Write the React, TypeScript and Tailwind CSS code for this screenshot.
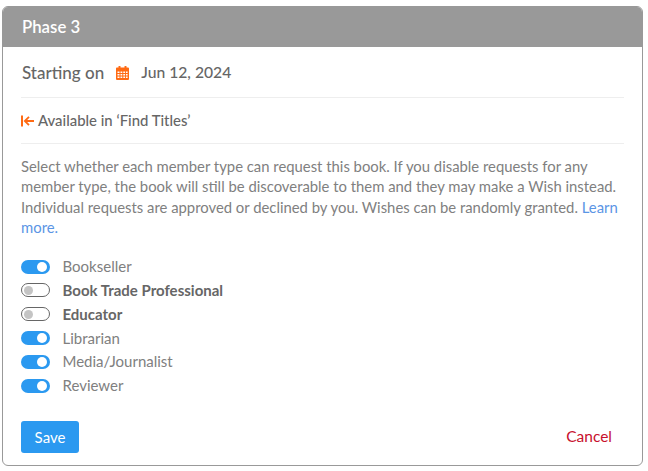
const members = [
    { label: "Bookseller", on: true },
    { label: "Book Trade Professional", on: false },
    { label: "Educator", on: false },
    { label: "Librarian", on: true },
    { label: "Media/Journalist", on: true },
    { label: "Reviewer", on: true },
];

const Toggle = ({ on }: { on: boolean }) =>
    on ? (
        <span className="flex items-center justify-end w-[29px] h-[14px] pr-[3px] rounded-full bg-[#2b99f0]">
            <span className="w-[10px] h-[10px] rounded-full bg-white" />
        </span>
    ) : (
        <span className="flex items-center w-[29px] h-[14px] pl-[2px] rounded-full bg-white border border-[#666]">
            <span className="w-[9px] h-[9px] rounded-full bg-[#c4c4c4]" />
        </span>
    );

const CalendarIcon = () => (
    <svg width="13" height="14" viewBox="0 0 13 14" className="block text-[#ff6a13]">
        <rect x="2.5" y="0" width="2" height="3" rx="0.5" fill="currentColor" />
        <rect x="8.5" y="0" width="2" height="3" rx="0.5" fill="currentColor" />
        <path
            fillRule="evenodd"
            fill="currentColor"
            d="M1.2 1.5H12a1 1 0 0 1 1 1V13a1 1 0 0 1-1 1H1a1 1 0 0 1-1-1V2.500a1 1 0 0 1 1.200-1ZM1.500 5.500V7h2V5.500ZM4.500 5.500V7h1.800V5.500ZM7.300 5.500V7h1.800V5.500ZM10 5.500V7h1.600V5.500ZM1.500 8V9.500h2V8ZM4.500 8V9.500h1.800V8ZM7.300 8V9.500h1.800V8ZM10 8V9.500h1.600V8ZM1.500 10.500V12h2V10.500ZM4.500 10.500V12h1.800V10.500ZM7.300 10.500V12h1.800V10.500ZM10 10.500V12h1.600V10.500Z"
        />
    </svg>
);

const ArrowIcon = () => (
    <svg width="13" height="12" viewBox="0 0 13 12" className="block text-[#ff6a13]">
        <rect x="0" y="0.500" width="2" height="11" fill="currentColor" />
        <path d="M8 1.800 3.800 6 8 10.200M4 6H13" fill="none" stroke="currentColor" strokeWidth="1.800" />
    </svg>
);

export default function App() {
    return (
        <div className="w-[648px] h-[471px] bg-white pt-[6px] pl-[2px] font-['Lato','Noto_Sans',sans-serif] text-[#666]">
            <div className="flex flex-col w-[641px] h-[460px] border border-[#999] rounded-[6px] overflow-hidden">
                <div className="flex items-center h-[41px] px-[19px] -mt-px bg-[#999] text-white text-[16.800px] font-semibold">
                    Phase 3
                </div>
                <div className="flex flex-col flex-1 px-[18px]">
                    <div className="flex items-center h-[51px] pt-[2px] pl-px border-b border-[#eee]">
                        <span className="text-[17px] font-medium">Starting on</span>
                        <span className="ml-[12px] mr-[12px]"><CalendarIcon /></span>
                        <span className="text-[15.700px] font-medium">Jun 12, 2024</span>
                    </div>
                    <div className="flex items-center h-[46px] border-b border-[#eee] text-[14.900px] font-medium">
                        <span className="mr-[4px]"><ArrowIcon /></span>
                        Available in ‘Find Titles’
                    </div>
                    <p className="mt-[12px] text-[14.850px] leading-[20.400px] text-[#808080]">
                        Select whether each member type can request this book. If you disable requests for any member type, the book will still be discoverable to them and they may make a Wish instead. Individual requests are approved or declined by you. Wishes can be randomly granted. <span className="text-[#5b95e5]">Learn more.</span>
                    </p>
                    <div className="flex flex-col mt-[17px]">
                        {members.map((m) => (
                            <div key={m.label} className="flex items-center gap-[12.500px] h-[23.800px]">
                                <Toggle on={m.on} />
                                <span className={m.on ? "text-[15px] text-[#808080]" : "text-[15px] font-bold"}>
                                    {m.label}
                                </span>
                            </div>
                        ))}
                    </div>
                    <div className="flex items-center justify-between mt-[24px]">
                        <button className="w-[58px] h-[32px] rounded-[3px] bg-[#2b99f0] text-white text-[15px]">
                            Save
                        </button>
                        <button className="mr-[12px] mb-[2px] text-[15.500px] text-[#c8102e]">Cancel</button>
                    </div>
                </div>
            </div>
        </div>
    );
}
